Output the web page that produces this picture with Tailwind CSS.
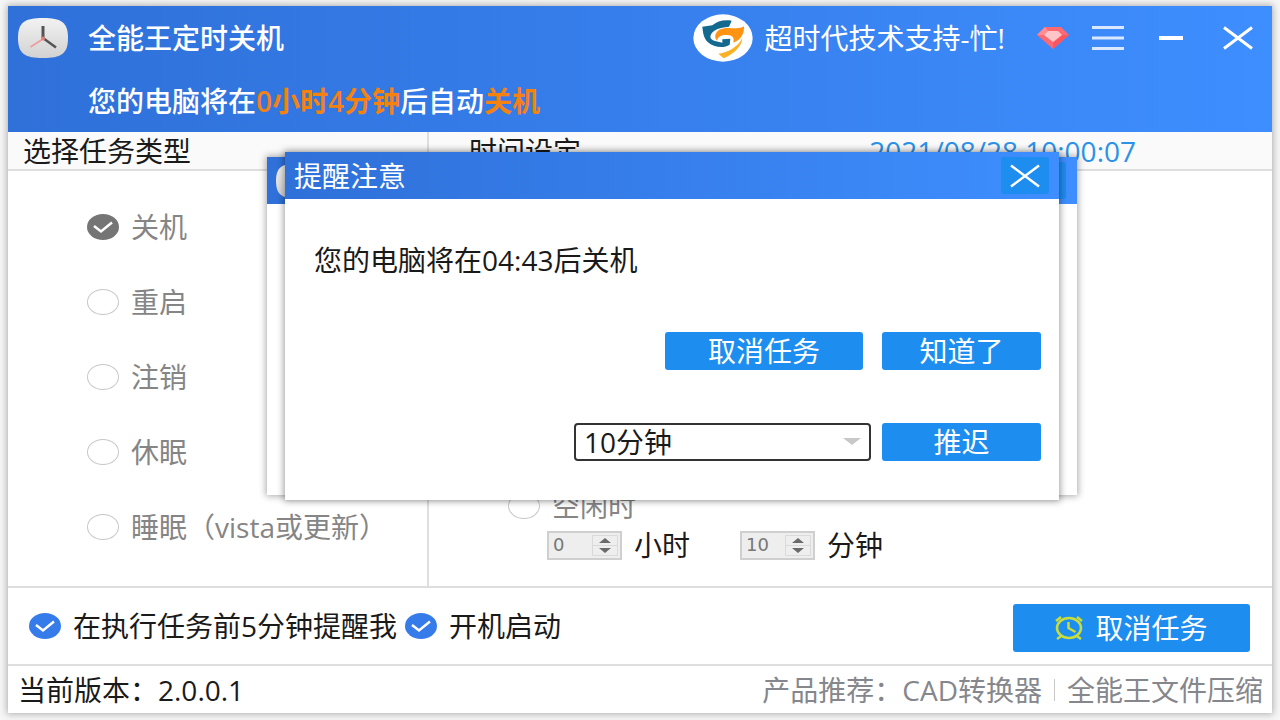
<!DOCTYPE html>
<html lang="zh-CN">
<head>
    <meta charset="UTF-8">
    <meta name="viewport" content="width=device-width, initial-scale=1.0">
    <title>全能王定时关机</title>
    <script src="https://cdn.jsdelivr.net/npm/@tailwindcss/browser@4"></script>
</head>
<body class="bg-[#f6f6f6] font-['Open_Sans','Noto_Sans_CJK_SC',sans-serif] text-[28px] leading-8 text-[#1a1a1a] whitespace-nowrap antialiased">
    <div class="flex min-h-screen px-2 pt-[6px] pb-[7px]">
        <div class="flex flex-1 flex-col bg-white shadow-[0_0_7px_1px_rgba(0,0,0,0.3)]">

            <!-- Title bar -->
            <header class="bg-linear-to-r from-[#2f70d9] to-[#3e8eff] text-white">
                <div class="flex h-16 items-center pl-[10px] pr-[19px]">
                    <svg class="h-10 w-[50px]" viewBox="0 0 50 40" fill="none">
                        <defs>
                            <linearGradient id="iconFace" x1="0" y1="0" x2="0" y2="1">
                                <stop offset="0" stop-color="#f2f2f2"/>
                                <stop offset="1" stop-color="#d2d2d2"/>
                            </linearGradient>
                        </defs>
                        <path d="M25 0C43 0 50 4 50 20S43 40 25 40 0 36 0 20 7 0 25 0Z" fill="url(#iconFace)"/>
                        <path d="M25 21 12.500 29" stroke="#eda09a" stroke-width="2"/>
                        <path d="M25 8v12" stroke="#555" stroke-width="3"/>
                        <path d="m25 20 13 9.500" stroke="#555" stroke-width="2.500"/>
                        <circle cx="25" cy="20.500" r="2" fill="#e0827c"/>
                    </svg>
                    <h1 class="ml-5 font-medium">全能王定时关机</h1>

                    <a href="#" class="ml-auto flex items-center gap-3">
                        <svg class="h-12 w-[60px]" viewBox="8 12 180 144">
                            <ellipse cx="98" cy="84" rx="89" ry="71" fill="#fff"/>
                            <path d="M36 50 66 46C80 34 100 28 124 32L116 50C100 51 84 54 72 62 56 74 56 88 74 93L96 98V88L120 86 118 104C100 116 70 112 52 96 40 84 38 68 36 50Z" fill="#14698f"/>
                            <path d="M161 49C140 62 116 47 90 58 74 66 70 82 80 92 84 76 100 73 116 76 128 78 132 84 129 98 152 90 162 72 161 49Z" fill="#ff9412"/>
                            <path d="M156 84C156 106 132 132 100 145L84 131C118 127 144 108 156 84Z" fill="#fbb124"/>
                        </svg>
                        <span>超时代技术支持-忙!</span>
                    </a>
                    <div class="ml-8 flex items-center">
                        <button type="button" aria-label="会员">
                            <svg class="h-6 w-8" viewBox="0 0 32 24">
                                <path d="M8 1h16l8 8-16 14L0 9Z" fill="#fb6972"/>
                                <path d="m8 1 3 4-4 4H0Z" fill="#ff8c92"/>
                                <path d="m32 9-16 14v-6l9-8Z" fill="#fa555f"/>
                                <path d="M11 5h10l4 4-9 7-9-7Z" fill="#ffc4c8"/>
                            </svg>
                        </button>
                        <button type="button" aria-label="菜单" class="ml-[23px]">
                            <svg class="h-6 w-8" viewBox="0 0 32 24" stroke="#d9e8ff" stroke-width="3">
                                <path d="M0 1.500h32M0 12h32M0 22.500h32"/>
                            </svg>
                        </button>
                        <button type="button" aria-label="最小化" class="ml-[35px]">
                            <svg class="h-6 w-6" viewBox="0 0 24 24" stroke="#fff" stroke-width="4">
                                <path d="M0 12h24"/>
                            </svg>
                        </button>
                        <button type="button" aria-label="关闭" class="ml-10">
                            <svg class="h-6 w-[30px]" viewBox="0 0 30 24" stroke="#fff" stroke-width="3">
                                <path d="m1 1.500 28 21M29 1.500 1 22.500"/>
                            </svg>
                        </button>
                    </div>
                </div>
                <p class="flex h-[62px] items-center pl-20 font-medium">您的电脑将在<span class="font-semibold text-[#f5820f]">0小时4分钟</span>后自动<span class="font-semibold text-[#f5820f]">关机</span></p>
            </header>

            <main class="flex flex-1">
                <!-- Task type -->
                <section class="flex w-[421px] flex-col border-r-2 border-[#dedede]">
                    <h2 class="flex h-[39px] items-center border-b-2 border-[#dedede] bg-[#fafafa] pl-[15px]">选择任务类型</h2>
                    <div class="pt-[18px] pl-[79px] text-[#858585]">
                        <label class="flex h-[75px] items-center gap-3">
                            <span class="grid">
                                <input type="radio" name="task" checked class="col-start-1 row-start-1 h-[26px] w-8 appearance-none rounded-[50%] bg-[#757575]">
                                <svg class="pointer-events-none col-start-1 row-start-1 h-[26px] w-8" viewBox="0 0 32 26" fill="none" stroke="#fff" stroke-width="2.500"><path d="m7 12 7 5.500L25 8.500"/></svg>
                            </span>
                            关机
                        </label>
                        <label class="flex h-[75px] items-center gap-3">
                            <input type="radio" name="task" class="h-[26px] w-8 appearance-none rounded-[50%] border border-[#c8c8c8]">
                            重启
                        </label>
                        <label class="flex h-[75px] items-center gap-3">
                            <input type="radio" name="task" class="h-[26px] w-8 appearance-none rounded-[50%] border border-[#c8c8c8]">
                            注销
                        </label>
                        <label class="flex h-[75px] items-center gap-3">
                            <input type="radio" name="task" class="h-[26px] w-8 appearance-none rounded-[50%] border border-[#c8c8c8]">
                            休眠
                        </label>
                        <label class="flex h-[75px] items-center gap-3">
                            <input type="radio" name="task" class="h-[26px] w-8 appearance-none rounded-[50%] border border-[#c8c8c8]">
                            睡眠（vista或更新）
                        </label>
                    </div>
                </section>

                <!-- Time settings -->
                <section class="flex flex-1 flex-col">
                    <div class="flex h-[39px] items-center justify-between border-b-2 border-[#dedede] bg-[#fafafa] pr-[136px] pl-10">
                        <h2>时间设定</h2>
                        <time class="text-[#2b92e8]">2021/08/28 10:00:07</time>
                    </div>
                    <div class="mt-auto pb-[26px] pl-[79px]">
                        <label class="flex items-center gap-3 text-[#858585]">
                            <input type="radio" name="when" class="h-[26px] w-8 appearance-none rounded-[50%] border border-[#c8c8c8]">
                            空闲时
                        </label>
                        <div class="mt-2 flex h-[30px] items-center pl-[39px]">
                            <label class="flex items-center gap-3">
                                <span class="flex h-[29px] w-[75px] border-2 border-[#cfcfcf] bg-[#eee] p-[2px]">
                                    <input type="number" value="0" class="w-0 flex-1 [appearance:textfield] pl-[2px] font-['DejaVu_Sans',sans-serif] text-lg leading-5 text-[#777]">
                                    <svg class="h-[21px] w-[26px]" viewBox="0 0 26 21">
                                        <path d="M.5.5h25v20H.5ZM0 10.500h26" fill="none" stroke="#dadada"/>
                                        <path d="m7 8 6-5 6 5ZM7 13l6 5 6-5Z" fill="#6a6a6a"/>
                                    </svg>
                                </span>
                                小时
                            </label>
                            <label class="ml-[50px] flex items-center gap-3">
                                <span class="flex h-[29px] w-[75px] border-2 border-[#cfcfcf] bg-[#eee] p-[2px]">
                                    <input type="number" value="10" class="w-0 flex-1 [appearance:textfield] pl-[2px] font-['DejaVu_Sans',sans-serif] text-lg leading-5 text-[#777]">
                                    <svg class="h-[21px] w-[26px]" viewBox="0 0 26 21">
                                        <path d="M.5.5h25v20H.5ZM0 10.500h26" fill="none" stroke="#dadada"/>
                                        <path d="m7 8 6-5 6 5ZM7 13l6 5 6-5Z" fill="#6a6a6a"/>
                                    </svg>
                                </span>
                                分钟
                            </label>
                        </div>
                    </div>
                </section>
            </main>

            <!-- Options -->
            <div class="flex h-20 items-center border-y-2 border-[#dedede] pr-[22px] pl-[21px]">
                <label class="flex items-center gap-3">
                    <span class="grid">
                        <input type="checkbox" checked class="col-start-1 row-start-1 h-[26px] w-8 appearance-none rounded-[50%] bg-[#357bea]">
                        <svg class="pointer-events-none col-start-1 row-start-1 h-[26px] w-8" viewBox="0 0 32 26" fill="none" stroke="#fff" stroke-width="2.500"><path d="m7 12 7 5.500L25 8.500"/></svg>
                    </span>
                    在执行任务前5分钟提醒我
                </label>
                <label class="ml-2 flex items-center gap-3">
                    <span class="grid">
                        <input type="checkbox" checked class="col-start-1 row-start-1 h-[26px] w-8 appearance-none rounded-[50%] bg-[#357bea]">
                        <svg class="pointer-events-none col-start-1 row-start-1 h-[26px] w-8" viewBox="0 0 32 26" fill="none" stroke="#fff" stroke-width="2.500"><path d="m7 12 7 5.500L25 8.500"/></svg>
                    </span>
                    开机启动
                </label>
                <button type="button" class="mt-1 ml-auto flex h-12 w-[237px] items-center justify-center gap-3 rounded-[3px] bg-[#1d8df0] text-white">
                    <svg class="h-6 w-7" viewBox="0 0 28 24" fill="none" stroke="#c8dc3c" stroke-width="2.500">
                        <ellipse cx="14" cy="12" rx="12" ry="10"/>
                        <path d="M13.500 6v6l7 4M1 5l5-4M27 5l-5-4M7 19.500l-5 3.500M21 19.500l5 3.500"/>
                    </svg>
                    取消任务
                </button>
            </div>

            <footer class="flex h-[47px] items-center pr-[9px] pl-[10px]">
                <p>当前版本：2.0.0.1</p>
                <div class="ml-auto flex items-center text-[#85878c]">
                    <span>产品推荐：</span>
                    <a href="#">CAD转换器</a>
                    <span class="mx-3 h-[22px] w-px bg-[#c8c8c8]"></span>
                    <a href="#">全能王文件压缩</a>
                </div>
            </footer>
        </div>
    </div>

    <!-- Earlier reminder, still open underneath -->
    <div class="absolute top-[157px] left-[267px] h-[338px] w-[810px] bg-white shadow-[0_0_7px_1px_rgba(0,0,0,0.35)]">
        <div class="flex h-[47px] items-center justify-between bg-linear-to-r from-[#2f70d9] to-[#3e8eff] pr-[11px] pl-[9px]">
            <svg class="h-9 w-11" viewBox="0 0 50 40"><path d="M25 0C43 0 50 4 50 20S43 40 25 40 0 36 0 20 7 0 25 0Z" fill="url(#iconFace)"/></svg>
            <span class="h-[37px] w-12 rounded-[3px] bg-[#1d8df0]"></span>
        </div>
    </div>

    <!-- Reminder -->
    <div role="dialog" aria-labelledby="remindTitle" class="absolute top-[152px] left-[285px] flex h-[348px] w-[774px] flex-col bg-white shadow-[0_0_7px_1px_rgba(0,0,0,0.4)]">
        <div class="flex h-[47px] items-center justify-between bg-linear-to-r from-[#2f70d9] to-[#3e8eff] pr-[10px] pl-[9px] text-white">
            <h2 id="remindTitle">提醒注意</h2>
            <button type="button" aria-label="关闭提醒" class="flex h-[37px] w-12 items-center justify-center rounded-[3px] bg-[#1d8df0]">
                <svg class="h-6 w-[30px]" viewBox="0 0 30 24" stroke="#fff" stroke-width="2.500">
                    <path d="m1 1.500 28 21M29 1.500 1 22.500"/>
                </svg>
            </button>
        </div>
        <p class="mt-[45px] pl-[29px]">您的电脑将在04:43后关机</p>
        <div class="mt-auto flex justify-end gap-[19px] pr-[18px] text-white">
            <button type="button" class="h-[38px] w-[198px] rounded-[3px] bg-[#1d8df0]">取消任务</button>
            <button type="button" class="h-[38px] w-[159px] rounded-[3px] bg-[#1d8df0]">知道了</button>
        </div>
        <div class="mt-[53px] mb-[39px] flex justify-end gap-[11px] pr-[18px]">
            <div class="grid w-[297px]">
                <select aria-label="推迟时间" class="col-start-1 row-start-1 h-[38px] appearance-none rounded-[4px] border-2 border-[#333] bg-white pl-2 leading-8">
                    <option>10分钟</option>
                </select>
                <svg class="pointer-events-none col-start-1 row-start-1 mr-[10px] h-2 w-[18px] self-center justify-self-end" viewBox="0 0 18 8"><path d="M0 0h18L9 7Z" fill="#c8c8c8"/></svg>
            </div>
            <button type="button" class="h-[38px] w-[159px] rounded-[3px] bg-[#1d8df0] text-white">推迟</button>
        </div>
    </div>
</body>
</html>
